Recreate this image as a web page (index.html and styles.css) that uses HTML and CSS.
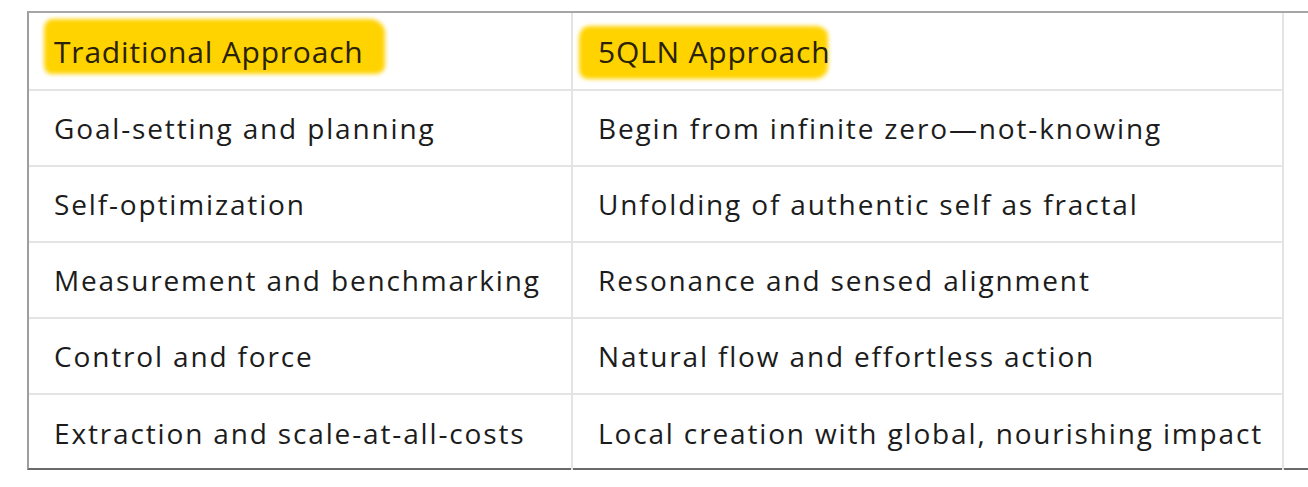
FILE: index.html
```html
<!DOCTYPE html>
<html>
<head>
<meta charset="utf-8">
<link rel="stylesheet" href="styles.css">
</head>
<body>
<div class="frame">
  <table class="compare">
    <thead>
      <tr>
        <th class="col-a"><span class="hl hl-a">Traditional Approach</span></th>
        <th class="col-b"><span class="hl hl-b">5QLN Approach</span></th>
      </tr>
    </thead>
    <tbody>
      <tr><td>Goal-setting and planning</td><td>Begin from infinite zero—not-knowing</td></tr>
      <tr><td>Self-optimization</td><td>Unfolding of authentic self as fractal</td></tr>
      <tr><td>Measurement and benchmarking</td><td>Resonance and sensed alignment</td></tr>
      <tr><td>Control and force</td><td>Natural flow and effortless action</td></tr>
      <tr><td>Extraction and scale-at-all-costs</td><td>Local creation with global, nourishing impact</td></tr>
    </tbody>
  </table>
</div>
</body>
</html>
```

FILE: styles.css
```css
html, body {
  margin: 0;
  padding: 0;
  background: #ffffff;
}
body {
  padding: 11px 0 0 27px;
  font-family: "Open Sans", "Liberation Sans", sans-serif;
  color: #1c1c1c;
}
.frame {
  border-top: 2px solid #a6a6a6;
  border-left: 2px solid #9e9e9e;
  border-bottom: 2px solid #6a6a6a;
  height: 459px;
  box-sizing: border-box;
}
.compare {
  border-collapse: collapse;
  width: 1255px;
  table-layout: fixed;
}
.compare th, .compare td {
  border: 2px solid #e4e4e4;
  height: 76px;
  box-sizing: border-box;
  padding: 0 0 0 25px;
  text-align: left;
  font-weight: 400;
  font-size: 28px;
  letter-spacing: 1.85px;
  white-space: nowrap;
}
.compare th {
  font-size: 30px;
  letter-spacing: 0.8px;
  color: #2a2208;
}
.compare tr > :first-child { border-left: none; width: 543px; }
.compare thead th { border-top: none; height: 77px; }
.compare tbody tr:last-child td { border-bottom: none; }
.hl {
  position: relative;
  display: inline-block;
  line-height: 40px;
  z-index: 0;
  isolation: isolate;
}
.hl::before {
  content: "";
  position: absolute;
  z-index: -1;
  background: #ffd300;
  filter: blur(2px);
}
.hl-a::before {
  left: -10px; right: -21px; top: -13px; bottom: -2px;
  border-radius: 8px 16px 10px 6px / 10px 14px 8px 10px;
}
.hl-b::before {
  left: -19px; right: 2px; top: -6px; bottom: -7px;
  border-radius: 10px 12px 14px 8px / 12px 10px 12px 10px;
}
```
